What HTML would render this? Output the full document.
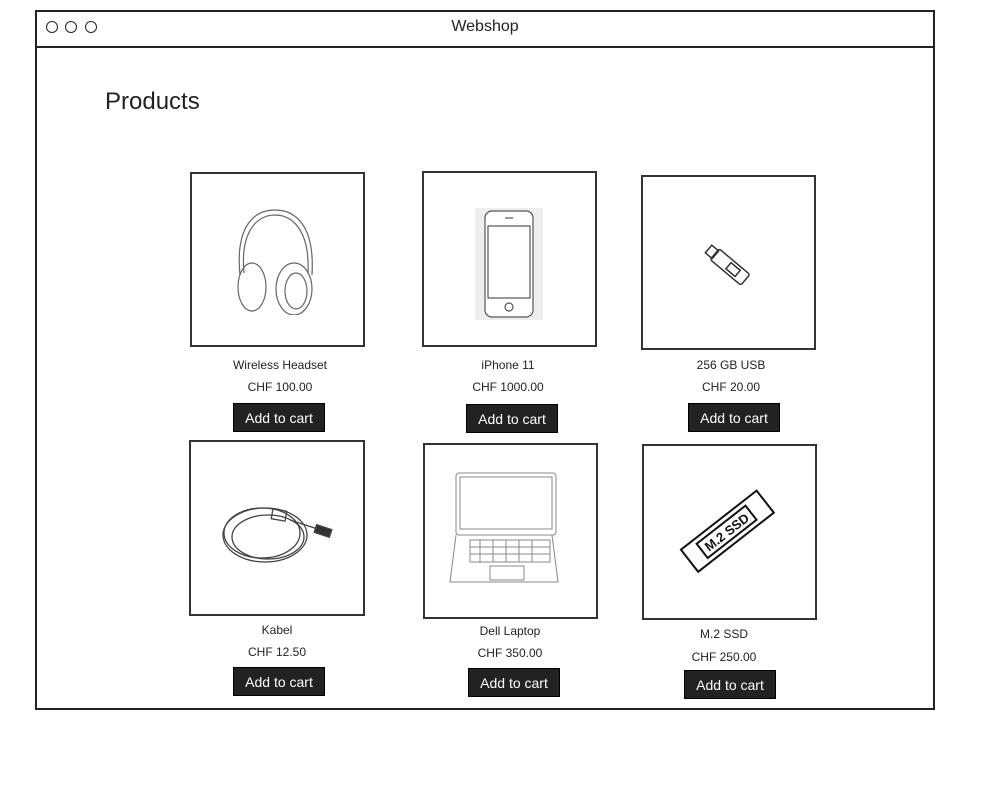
<!DOCTYPE html>
<html><head><meta charset="utf-8"><style>
body{margin:0;width:1000px;height:810px;background:#fff;position:relative;font-family:"Liberation Sans",sans-serif;color:#222;overflow:hidden}
.a{position:absolute}
.card{position:absolute;border:2px solid #333;box-sizing:border-box;background:#fff}
.t{position:absolute;font-size:12px;text-align:center;width:200px}
.btn{position:absolute;background:#222;color:#fff;font-size:14px;text-align:center;line-height:29px;width:92px;height:29px;border:1px solid #000;box-sizing:border-box}
svg{position:absolute}
</style></head><body>
<div class="a" style="left:35px;top:10px;width:900px;height:700px;border:2px solid #222;box-sizing:border-box"></div>
<div class="a" style="left:35px;top:46px;width:900px;height:2px;background:#222"></div>
<div class="a" style="left:46px;top:21px;width:10px;height:10px;border:1.5px solid #222;border-radius:50%"></div>
<div class="a" style="left:65px;top:21px;width:10px;height:10px;border:1.5px solid #222;border-radius:50%"></div>
<div class="a" style="left:85px;top:21px;width:10px;height:10px;border:1.5px solid #222;border-radius:50%"></div>
<div class="a" style="left:435px;top:18px;width:100px;text-align:center;font-size:16px">Webshop</div>
<div class="a" style="left:105px;top:88px;font-size:24px">Products</div>

<div class="card" style="left:190px;top:172px;width:175px;height:175px"></div>
<div class="card" style="left:422px;top:171px;width:175px;height:176px"></div>
<div class="card" style="left:641px;top:175px;width:175px;height:175px"></div>
<div class="card" style="left:189px;top:440px;width:176px;height:176px"></div>
<div class="card" style="left:423px;top:443px;width:175px;height:176px"></div>
<div class="card" style="left:642px;top:444px;width:175px;height:176px"></div>

<svg style="left:230px;top:205px" width="90" height="110" fill="none" stroke="#666" stroke-width="1.2">
<path d="M10 70 C5 20 25 5 45 5 C65 5 85 20 82 70"/><path d="M14 68 C10 25 28 10 45 10 C62 10 80 25 78 68"/>
<ellipse cx="22" cy="82" rx="14" ry="24"/><ellipse cx="64" cy="84" rx="18" ry="26"/><ellipse cx="66" cy="86" rx="11" ry="18"/>
</svg>
<svg style="left:475px;top:208px" width="70" height="112" fill="none" stroke="#555" stroke-width="1.2">
<rect x="0" y="0" width="68" height="112" fill="#eee" stroke="none"/>
<rect x="10" y="3" width="48" height="106" rx="7" fill="#fff"/><rect x="13" y="18" width="42" height="72"/><circle cx="34" cy="99" r="4"/><line x1="30" y1="10" x2="38" y2="10"/>
</svg>
<svg style="left:700px;top:240px" width="60" height="55" fill="none" stroke="#333" stroke-width="1.5">
<g transform="rotate(40 30 27)"><rect x="10" y="20" width="40" height="14" rx="2"/><rect x="2" y="22" width="9" height="10"/><rect x="28" y="23" width="12" height="8"/></g>
</svg>
<svg style="left:220px;top:495px" width="120" height="75" fill="none" stroke="#444" stroke-width="1.3">
<ellipse cx="45" cy="40" rx="42" ry="27"/><ellipse cx="48" cy="42" rx="36" ry="22"/><ellipse cx="42" cy="38" rx="38" ry="25"/>
<path d="M70 25 L110 38"/><rect x="95" y="32" width="16" height="8" fill="#333" transform="rotate(18 103 36)"/><rect x="52" y="15" width="14" height="10" transform="rotate(10 59 20)"/>
</svg>
<svg style="left:448px;top:470px" width="112" height="120" fill="none" stroke="#888" stroke-width="1">
<rect x="8" y="3" width="100" height="62" rx="3"/><rect x="12" y="7" width="92" height="52"/>
<path d="M8 65 L2 112 L110 112 L104 65"/>
<rect x="22" y="70" width="80" height="22"/><path d="M22 77H102M22 84H102M32 70V92M45 70V92M58 70V92M71 70V92M84 70V92"/>
<rect x="42" y="96" width="34" height="14"/>
</svg>
<svg style="left:678px;top:485px" width="100" height="95">
<g transform="rotate(-38 50 47)" stroke="#111" stroke-width="2" fill="#fff">
<rect x="2" y="32" width="96" height="28"/><rect x="18" y="37" width="62" height="18"/>
<text x="49" y="51" font-family="Liberation Sans" font-weight="bold" font-size="13" fill="#111" stroke="none" text-anchor="middle">M.2 SSD</text>
</g></svg>

<div class="t" style="left:180px;top:358px">Wireless Headset</div>
<div class="t" style="left:180px;top:380px">CHF 100.00</div>
<div class="btn" style="left:233px;top:403px">Add to cart</div>
<div class="t" style="left:408px;top:358px">iPhone 11</div>
<div class="t" style="left:408px;top:380px">CHF 1000.00</div>
<div class="btn" style="left:466px;top:404px">Add to cart</div>
<div class="t" style="left:631px;top:358px">256 GB USB</div>
<div class="t" style="left:631px;top:380px">CHF 20.00</div>
<div class="btn" style="left:688px;top:403px">Add to cart</div>

<div class="t" style="left:177px;top:623px">Kabel</div>
<div class="t" style="left:177px;top:645px">CHF 12.50</div>
<div class="btn" style="left:233px;top:667px">Add to cart</div>
<div class="t" style="left:410px;top:624px">Dell Laptop</div>
<div class="t" style="left:410px;top:646px">CHF 350.00</div>
<div class="btn" style="left:468px;top:668px">Add to cart</div>
<div class="t" style="left:624px;top:627px">M.2 SSD</div>
<div class="t" style="left:624px;top:650px">CHF 250.00</div>
<div class="btn" style="left:684px;top:670px">Add to cart</div>
</body></html>
